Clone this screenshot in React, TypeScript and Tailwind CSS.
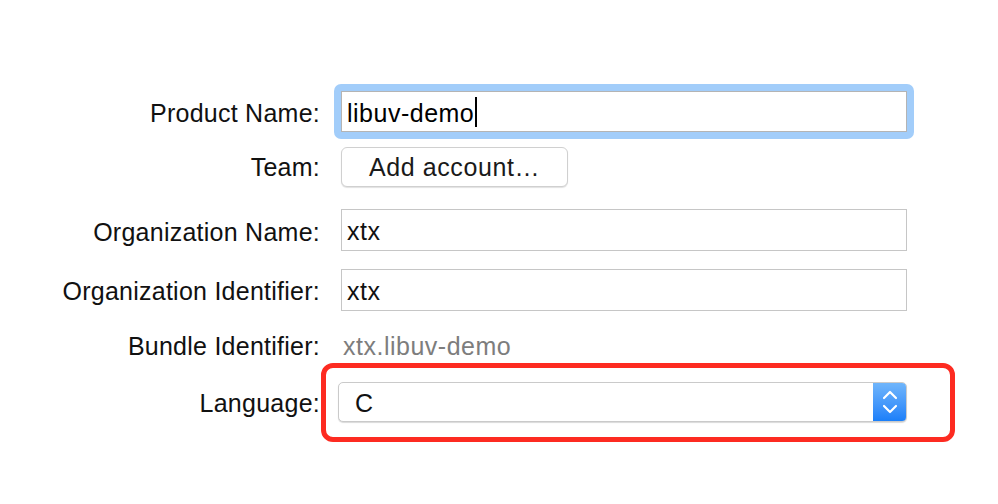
import React from "react";

const font = { fontFamily: '"Liberation Sans", Arial, sans-serif' };

function Label({ children, className = "" }: { children: React.ReactNode; className?: string }) {
  return (
    <div className={`w-[320px] shrink-0 text-right text-[25px] leading-none tracking-[0.25px] text-[#111] ${className}`}>
      {children}
    </div>
  );
}

export default function App() {
  return (
    <div className="w-[998px] h-[504px] bg-white overflow-hidden" style={font}>
      <div className="flex flex-col pt-[84px]">
        {/* Product Name */}
        <div className="flex items-center">
          <Label className="pt-[3px]">Product Name:</Label>
          <div className="ml-[14px] p-[7px] rounded-[7px] bg-[#a2cdfa]">
            <div className="w-[566px] h-[41px] bg-white border border-[#b4b4b4] flex items-center pl-[5px] pt-[3px]">
              <span className="text-[25px] leading-none tracking-[0.5px] text-black">libuv-demo</span>
              <span className="w-[2px] h-[30px] bg-black ml-[1px] -mt-[2px]" />
            </div>
          </div>
        </div>

        {/* Team */}
        <div className="flex items-center mt-[8px]">
          <Label>Team:</Label>
          <button className="ml-[21px] w-[227px] h-[40px] rounded-[6px] border border-[#d0d0d0] bg-white shadow-[0_1px_1px_rgba(0,0,0,0.12)] text-[25px] leading-none tracking-[0.6px] text-[#1a1a1a] flex items-center justify-center">
            Add account…
          </button>
        </div>

        {/* Organization Name */}
        <div className="flex items-center mt-[22px]">
          <Label className="pt-[4px]">Organization Name:</Label>
          <div className="ml-[21px] w-[566px] h-[42px] border border-[#c6c6c6] bg-white flex items-center pl-[5px] pt-[2px]">
            <span className="text-[25px] leading-none tracking-[0.5px] text-[#111]">xtx</span>
          </div>
        </div>

        {/* Organization Identifier */}
        <div className="flex items-center mt-[18px]">
          <Label className="pt-[3px]">Organization Identifier:</Label>
          <div className="ml-[21px] w-[566px] h-[42px] border border-[#c6c6c6] bg-white flex items-center pl-[5px] pt-[2px]">
            <span className="text-[25px] leading-none tracking-[0.5px] text-[#111]">xtx</span>
          </div>
        </div>

        {/* Bundle Identifier */}
        <div className="flex items-center mt-[18px] h-[34px]">
          <Label>Bundle Identifier:</Label>
          <span className="ml-[23px] text-[25px] leading-none tracking-[0.5px] text-[#7d7d7d]">xtx.libuv-demo</span>
        </div>

        {/* Language */}
        <div className="flex items-center">
          <Label className="pt-[1px]">Language:</Label>
          <div className="ml-[1px] w-[634px] h-[79px] border-[5px] border-[#fd2b21] rounded-[12px] pl-[12px] pt-[14px]">
            <div className="w-[569px] h-[40px] rounded-[5px] border border-[#cacaca] bg-white shadow-[0_1px_1px_rgba(0,0,0,0.15)] flex items-stretch overflow-hidden">
              <div className="flex-1 flex items-center pl-[16px] pt-[2px] text-[25px] leading-none text-[#111]">C</div>
              <div className="w-[33px] bg-gradient-to-b from-[#6fb5fb] to-[#1a7ff9] flex items-center justify-center">
                <svg width="16" height="30" viewBox="0 0 16 30" fill="none" stroke="white" strokeWidth="2.2" strokeLinecap="round" strokeLinejoin="round">
                  <path d="M2 11 L8 5 L14 11" />
                  <path d="M2 19 L8 25 L14 19" />
                </svg>
              </div>
            </div>
          </div>
        </div>
      </div>
    </div>
  );
}
